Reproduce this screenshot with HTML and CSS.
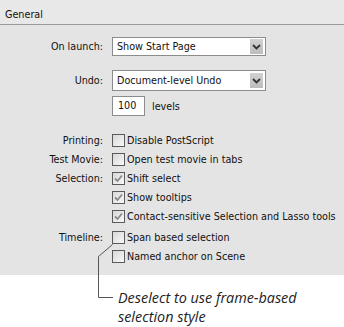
FILE: index.html
```html
<!DOCTYPE html>
<html>
<head>
<meta charset="utf-8">
<link rel="stylesheet" href="styles.css">
</head>
<body>
<div class="panel">
  <div class="header">General</div>
  <div class="form">
    <div class="row row-launch">
      <div class="label">On launch:</div>
      <div class="select"><span class="select-text">Show Start Page</span><span class="arrow"><svg width="9" height="6" viewBox="0 0 9 6"><path d="M1 1 L4.5 4.5 L8 1" fill="none" stroke="#333" stroke-width="1.8"/></svg></span></div>
    </div>
    <div class="row row-undo">
      <div class="label">Undo:</div>
      <div class="select"><span class="select-text">Document-level Undo</span><span class="arrow"><svg width="9" height="6" viewBox="0 0 9 6"><path d="M1 1 L4.5 4.5 L8 1" fill="none" stroke="#333" stroke-width="1.8"/></svg></span></div>
    </div>
    <div class="row row-levels">
      <div class="label"></div>
      <div class="ctrl"><span class="num">100</span><span class="txt">levels</span></div>
    </div>
    <div class="row row-cb gap-big">
      <div class="label">Printing:</div>
      <div class="ctrl"><span class="cb"></span><span class="txt">Disable PostScript</span></div>
    </div>
    <div class="row row-cb">
      <div class="label">Test Movie:</div>
      <div class="ctrl"><span class="cb"></span><span class="txt">Open test movie in tabs</span></div>
    </div>
    <div class="row row-cb">
      <div class="label">Selection:</div>
      <div class="ctrl"><span class="cb checked"><svg width="11" height="11" viewBox="0 0 11 11"><path d="M2 5.5 L4.5 8 L9 2.5" fill="none" stroke="#8a8a8a" stroke-width="1.8"/></svg></span><span class="txt">Shift select</span></div>
    </div>
    <div class="row row-cb">
      <div class="label"></div>
      <div class="ctrl"><span class="cb checked"><svg width="11" height="11" viewBox="0 0 11 11"><path d="M2 5.5 L4.5 8 L9 2.5" fill="none" stroke="#8a8a8a" stroke-width="1.8"/></svg></span><span class="txt">Show tooltips</span></div>
    </div>
    <div class="row row-cb">
      <div class="label"></div>
      <div class="ctrl"><span class="cb checked"><svg width="11" height="11" viewBox="0 0 11 11"><path d="M2 5.5 L4.5 8 L9 2.5" fill="none" stroke="#8a8a8a" stroke-width="1.8"/></svg></span><span class="txt">Contact-sensitive Selection and Lasso tools</span></div>
    </div>
    <div class="row row-cb gap-mid">
      <div class="label">Timeline:</div>
      <div class="ctrl"><span class="cb"></span><span class="txt">Span based selection</span></div>
    </div>
    <div class="row row-cb">
      <div class="label"></div>
      <div class="ctrl"><span class="cb"></span><span class="txt">Named anchor on Scene</span></div>
    </div>
  </div>
</div>
<div class="caption">
  <p>Deselect to use frame-based<br>selection style</p>
</div>
<svg class="callout" width="344" height="327" viewBox="0 0 344 327"><path d="M112.5 244.5 L98.5 256.5 L98.5 297.5 L113 297.5" fill="none" stroke="#555" stroke-width="1"/></svg>
</body>
</html>
```
FILE: styles.css
```css
html, body {
  margin: 0;
  padding: 0;
  background: #ffffff;
}
body {
  width: 344px;
  height: 327px;
  overflow: hidden;
  font-family: "DejaVu Sans Condensed", "DejaVu Sans", sans-serif;
  font-stretch: condensed;
  font-size: 10.7px;
  color: #111;
  position: relative;
}
.panel {
  background: #e4e4e4;
  height: 275px;
}
.header {
  height: 25px;
  box-sizing: border-box;
  padding: 8px 0 0 5px;
  line-height: 14px;
  border-bottom: 1px solid #9a9a9a;
  background: #e8e8e8;
}
.form {
  padding-top: 12px;
}
.row {
  display: grid;
  grid-template-columns: 103px auto;
  column-gap: 9px;
  align-items: center;
  white-space: nowrap;
}
.label {
  text-align: right;
}
.select {
  width: 154px;
  height: 19px;
  box-sizing: border-box;
  border: 1px solid #8c8c8c;
  background: #fff;
  display: flex;
  align-items: center;
  justify-content: space-between;
  padding: 0 2px 0 4px;
}
.arrow {
  width: 13px;
  height: 15px;
  background: linear-gradient(#d2d2d2, #bcbcbc);
  display: flex;
  align-items: center;
  justify-content: center;
}
.row-undo {
  margin-top: 14px;
}
.row-undo .select {
  height: 21px;
}
.row-levels {
  margin-top: 5px;
}
.ctrl {
  display: flex;
  align-items: center;
}
.num {
  width: 33px;
  height: 20px;
  box-sizing: border-box;
  border: 1px solid #8c8c8c;
  background: #fff;
  padding-left: 5px;
  line-height: 18px;
  margin-right: 7px;
}
.row-cb {
  height: 19px;
}
.gap-big {
  margin-top: 15px;
}
.gap-mid {
  margin-top: 1.5px;
}
.cb {
  width: 13px;
  height: 13px;
  box-sizing: border-box;
  border: 1px solid #5a5a5a;
  background: linear-gradient(135deg, #d8d8d8, #f8f8f8);
  margin-right: 2px;
  display: flex;
  align-items: center;
  justify-content: center;
}
.caption {
  padding: 13px 0 0 118px;
}
.caption p {
  margin: 0;
  font-family: "Open Sans", "Noto Sans", sans-serif;
  font-stretch: normal;
  font-style: italic;
  font-size: 14.4px;
  line-height: 19px;
  color: #222;
}
.callout {
  position: absolute;
  left: 0;
  top: 0;
  pointer-events: none;
}
```
